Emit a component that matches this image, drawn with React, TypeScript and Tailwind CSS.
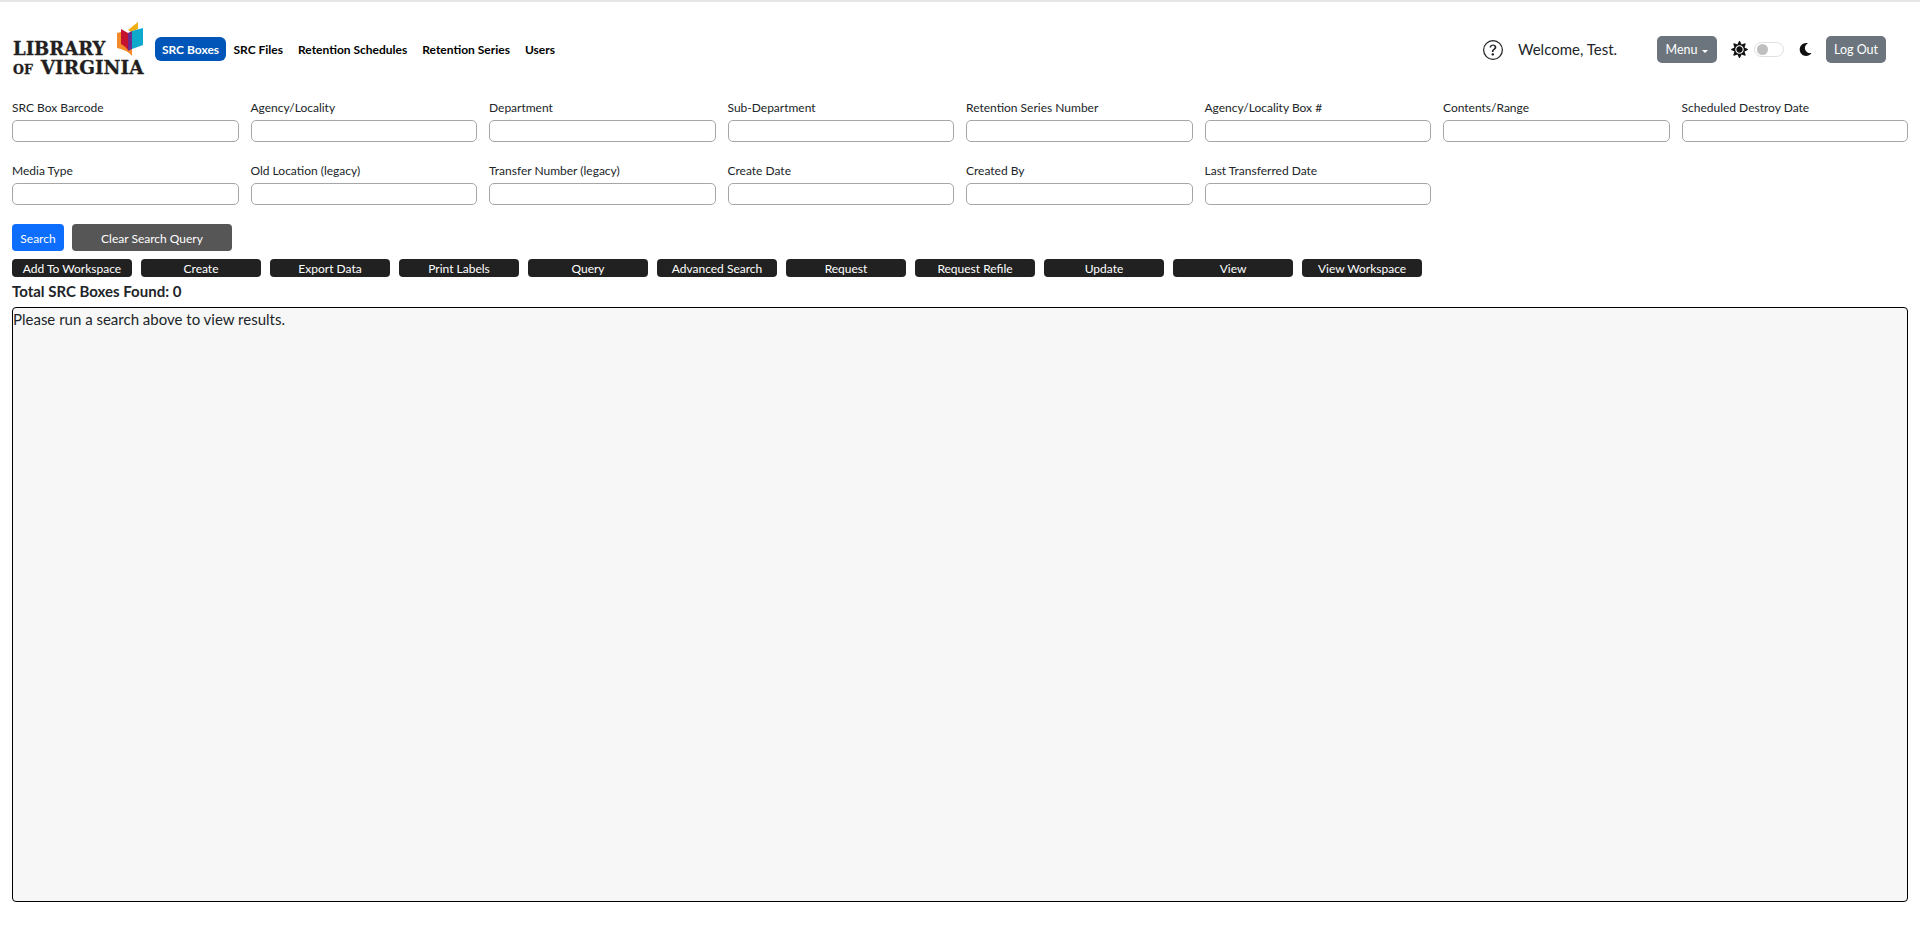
import { FaMoon, FaSun } from "react-icons/fa";
import { BsQuestionCircle } from "react-icons/bs";

const row1 = ["SRC Box Barcode", "Agency/Locality", "Department", "Sub-Department", "Retention Series Number", "Agency/Locality Box #", "Contents/Range", "Scheduled Destroy Date"];
const row2 = ["Media Type", "Old Location (legacy)", "Transfer Number (legacy)", "Create Date", "Created By", "Last Transferred Date"];
const actions = ["Add To Workspace", "Create", "Export Data", "Print Labels", "Query", "Advanced Search", "Request", "Request Refile", "Update", "View", "View Workspace"];
const nav = ["SRC Files", "Retention Schedules", "Retention Series", "Users"];

function Field({ label }: { label: string }) {
  return (
    <div className="flex flex-col">
      <label className="h-[19px] text-[12px] leading-[19px] text-[#212529]">{label}</label>
      <input className="mt-[3px] h-[22px] w-full rounded-[5px] border border-[#a6a6a6] bg-white" />
    </div>
  );
}

function Logo() {
  return (
    <div className="relative h-[56px] w-[135px] shrink-0 font-['DejaVu_Serif',serif] font-bold text-[#231f20]">
      <div className="absolute left-[1px] top-[16px] text-[18px] leading-[22px] [-webkit-text-stroke:0.3px_#231f20]">LIBRARY</div>
      <div className="absolute left-[1px] top-[35px] flex items-baseline whitespace-nowrap text-[18.5px] leading-[22px] [-webkit-text-stroke:0.3px_#231f20]">
        <span className="mr-[8px] text-[12.5px]">OF</span>VIRGINIA
      </div>
      <svg className="absolute left-[105px] top-0" width="26" height="34" viewBox="0 0 26 34">
        <path d="M11 8 L21 0 L21 7 L14 10 Z" fill="#f0b015" />
        <path d="M0 11 L0 26 C5 27 11 29 15 34 L15 27 L4 21 L4 10 Z" fill="#f58a2a" />
        <path d="M4 7 L11 11 L11 28 C9 25 6 23 4 22 Z" fill="#c4122f" />
        <path d="M11 11 L15 9 L15 27 L11 29 Z" fill="#6d2b8c" />
        <path d="M15 9 L26 6 L26 23 L15 27 Z" fill="#0ea9cb" />
      </svg>
    </div>
  );
}

export default function App() {
  return (
    <div className="flex h-[936px] flex-col overflow-hidden border-t-2 border-[#e6e6e6] bg-white font-['Lato',sans-serif] text-[#212529]">
      <header className="flex h-[96px] items-center pl-[12px]">
        <Logo />
        <nav className="ml-[8px] flex items-center pb-[2px] text-[12px] font-bold text-black">
          <a className="flex h-[24px] w-[71px] items-center justify-center rounded-[6px] bg-[#0056b8] pt-[1px] text-white">SRC Boxes</a>
          {nav.map((n) => (
            <a key={n} className="flex h-[24px] items-center px-[7.5px] pt-[1px]">{n}</a>
          ))}
        </nav>
        <div className="ml-auto flex items-center pb-[1px] pr-[34px]">
          <BsQuestionCircle className="text-[20px] text-[#212529]" />
          <span className="ml-[15px] w-[139px] text-[15px]">Welcome, Test.</span>
          <button className="flex h-[27px] w-[60px] items-center justify-center gap-[5px] rounded-[5px] bg-[#6c757d] pt-[1px] text-[12.5px] text-white">
            Menu
            <span className="mt-[2px] border-x-[3px] border-t-[3px] border-x-transparent border-t-white" />
          </button>
          <FaSun className="ml-[13.5px] text-[17px] text-[#111]" />
          <span className="ml-[6.5px] flex h-[15px] w-[30px] items-center rounded-full border border-[#dfdfe3] bg-white pl-[2px]">
            <span className="h-[11px] w-[11px] rounded-full bg-[#bfbfbf]" />
          </span>
          <FaMoon className="ml-[14.5px] text-[13px] text-[#111]" />
          <button className="ml-[14.5px] h-[27px] w-[60px] rounded-[5px] bg-[#6c757d] pt-[1px] text-[12.5px] text-white">Log Out</button>
        </div>
      </header>

      <section className="px-[12px]">
        <div className="grid grid-cols-8 gap-x-[12px]">
          {row1.map((l) => <Field key={l} label={l} />)}
        </div>
        <div className="mt-[19px] grid grid-cols-8 gap-x-[12px]">
          {row2.map((l) => <Field key={l} label={l} />)}
        </div>
        <div className="mt-[19px] flex gap-[8px]">
          <button className="h-[27px] w-[52px] rounded-[4px] bg-[#0d6efd] pt-[2px] text-[12px] text-white">Search</button>
          <button className="h-[27px] w-[160px] rounded-[4px] bg-[#565656] pt-[2px] text-[12px] text-white">Clear Search Query</button>
        </div>
        <div className="mt-[8px] flex gap-[9px]">
          {actions.map((a) => (
            <button key={a} className="h-[18px] w-[120px] rounded-[4px] bg-[#212121] pt-[1px] text-[12px] leading-[18px] text-white">{a}</button>
          ))}
        </div>
        <div className="mt-[3px] h-[23px] text-[15px] font-bold leading-[22px]">Total SRC Boxes Found: 0</div>
        <div className="mt-[4px] h-[595px] rounded-[4px] border border-black bg-[#f7f7f7] text-[15px] leading-[22px]">
          Please run a search above to view results.
        </div>
      </section>
    </div>
  );
}
